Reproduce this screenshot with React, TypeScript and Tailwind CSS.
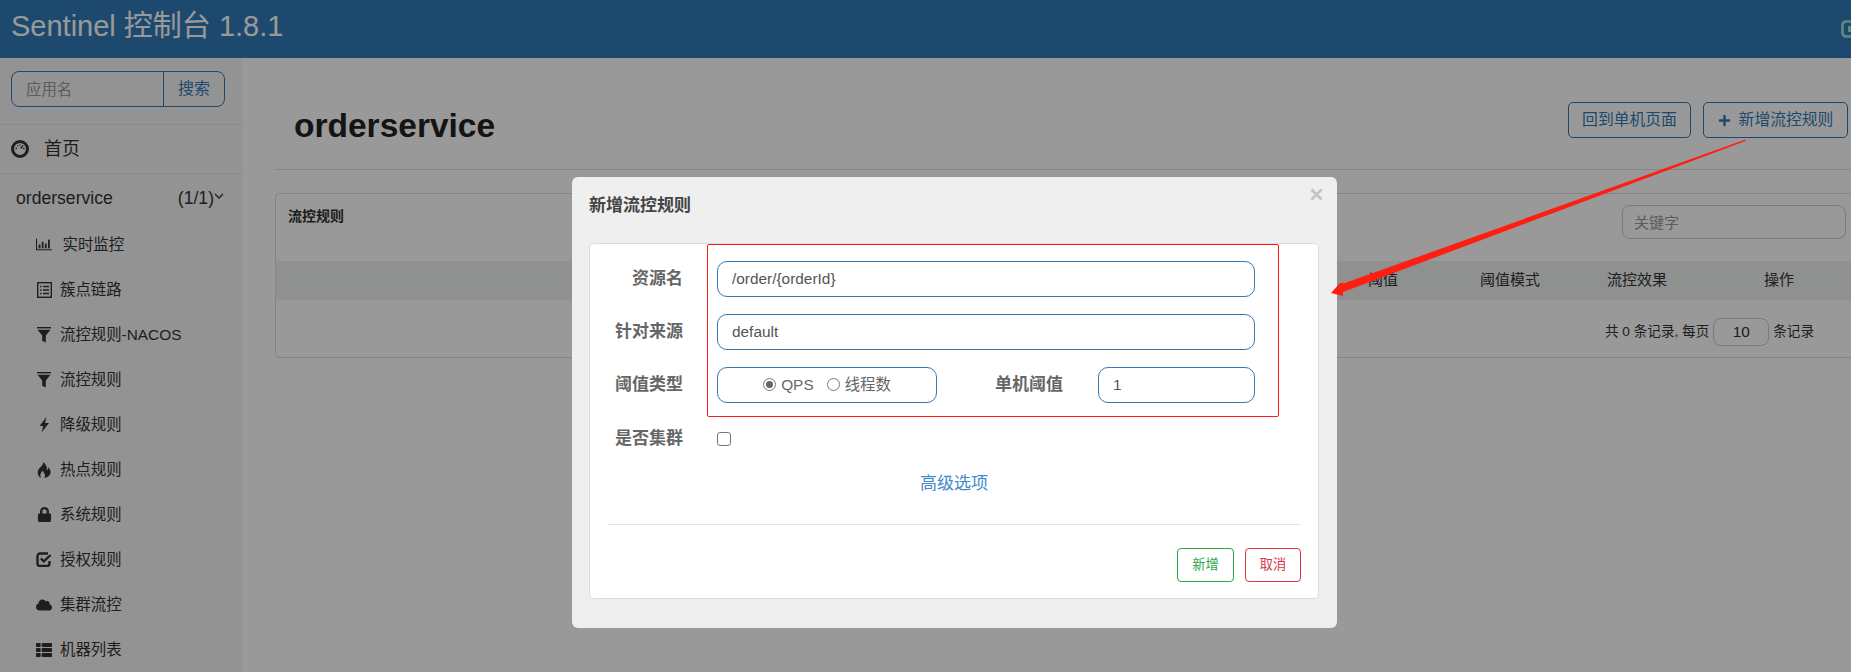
import { FaCloud, FaLock, FaPlus, FaThList } from "react-icons/fa";
import type { ReactNode } from "react";

const FONT = "font-['Liberation_Sans','Noto_Sans_CJK_SC',sans-serif]";

const Funnel = () => (
  <svg viewBox="0 0 14 16" className="h-[16px] w-[14px] fill-current">
    <rect x="0" y="0" width="14" height="1.4" />
    <path d="M0.5 2.8h13L8.8 8.5V15.500l-3.600-1.800V8.500z" />
  </svg>
);

const Gauge = () => (
  <svg viewBox="0 0 18 18" className="h-[18px] w-[18px]">
    <circle cx="9" cy="9" r="7.500" fill="none" stroke="currentColor" strokeWidth="3" />
    <path d="M4.500 8.500h1.500M12 8.500h1.500M6.500 5.500l.8.8M9 4.500v1M12 5.500L9.500 8.500" stroke="currentColor" strokeWidth="1.300" fill="none" />
  </svg>
);

const Stats = () => (
  <svg viewBox="0 0 18 13" className="h-[13px] w-[18px] fill-current">
    <path d="M0 0h1.200v11.800H18V13H0z" />
    <rect x="3" y="6.500" width="2" height="4.300" />
    <rect x="6.500" y="3.500" width="2" height="7.300" />
    <rect x="10" y="5.500" width="2" height="5.300" />
    <rect x="13.500" y="1" width="2" height="9.800" />
  </svg>
);

const ListAlt = () => (
  <svg viewBox="0 0 15 16" className="h-[16px] w-[15px]">
    <rect x="0.700" y="0.700" width="13.600" height="14.600" fill="none" stroke="currentColor" strokeWidth="1.400" />
    <path d="M3 4.500h1.500M6 4.500h6M3 8h1.500M6 8h6M3 11.500h1.500M6 11.500h6" stroke="currentColor" strokeWidth="1.400" fill="none" />
  </svg>
);

const Flash = () => (
  <svg viewBox="0 0 10 16" className="h-[16px] w-[10px] fill-current">
    <path d="M7.500 0L0.500 9h3.800L2.500 15.500 10 6H6z" />
  </svg>
);

const Fire = () => (
  <svg viewBox="0 0 14 16" className="h-[16px] w-[14px] fill-current">
    <path d="M6 0C7 3 3 5 1.500 7.500 0 10 .5 14 4 16 2.500 13 3.500 10.500 6 8.500c0 2.500 2 2.500 2 5 0 1-.2 2-1 2.500 4-.5 7-3 6.500-6.500-.2-2-1.500-3.500-2-4.500 0 2-1 3-1.700 3C10.500 5 9 2 6 0z" />
  </svg>
);

const CheckBox = () => (
  <svg viewBox="0 0 16 15" className="h-[15px] w-[16px]">
    <path d="M13.500 9v2.500a2.500 2.500 0 0 1-2.500 2.500H4a2.500 2.500 0 0 1-2.500-2.500V4A2.500 2.500 0 0 1 4 1.500h8" fill="none" stroke="currentColor" strokeWidth="2.400" />
    <path d="M4.800 6.400l3 3L14.600 3" fill="none" stroke="currentColor" strokeWidth="2.200" />
  </svg>
);

const menu: { icon: ReactNode; label: string; gap: string }[] = [
  { icon: <Stats />, label: "实时监控", gap: "gap-[10.5px]" },
  { icon: <ListAlt />, label: "簇点链路", gap: "gap-[8px]" },
  { icon: <Funnel />, label: "流控规则-NACOS", gap: "gap-[8px]" },
  { icon: <Funnel />, label: "流控规则", gap: "gap-[8px]" },
  { icon: <Flash />, label: "降级规则", gap: "gap-[8px]" },
  { icon: <Fire />, label: "热点规则", gap: "gap-[8px]" },
  { icon: <FaLock size={15} />, label: "系统规则", gap: "gap-[8px]" },
  { icon: <CheckBox />, label: "授权规则", gap: "gap-[8px]" },
  { icon: <FaCloud size={16} />, label: "集群流控", gap: "gap-[8px]" },
  { icon: <FaThList size={16} />, label: "机器列表", gap: "gap-[8px]" },
];

const Sidebar = () => (
  <aside className="h-[614px] w-[242px] shrink-0 overflow-hidden bg-[#f5f5f5] text-[#333]">
    <div className="h-[66px] pl-[11px] pt-[13px]">
      <div className="flex h-[36px] w-[214px] rounded-[8px] border border-[#337ab7]">
        <div className="flex-1 pl-[14px] pt-[6px] text-[15.4px] text-[#999]">应用名</div>
        <div className="flex w-[61px] items-center justify-center border-l border-[#337ab7] text-[16px] text-[#337ab7]">搜索</div>
      </div>
    </div>
    <div className="flex h-[50px] items-center gap-[15px] border-y border-[#e7e7e7] pl-[11px] text-[18px]">
      <Gauge />
      <span>首页</span>
    </div>
    <div className="flex h-[47px] items-center pl-[16px] pr-[18px] pt-[2px] text-[17.6px]">
      <span className="flex-1">orderservice</span>
      <span>(1/1)</span>
      <svg viewBox="0 0 10 6" className="mb-[6px] h-[6px] w-[10px]">
        <path d="M1 1l4 4 4-4" fill="none" stroke="currentColor" strokeWidth="1.300" />
      </svg>
    </div>
    <ul className="mt-[1px]">
      {menu.map((item) => (
        <li key={item.label} className={`flex h-[45px] items-center pl-[36px] text-[15.4px] ${item.gap}`}>
          <span className="flex w-[16px] justify-center">{item.icon}</span>
          <span>{item.label}</span>
        </li>
      ))}
    </ul>
  </aside>
);

const Main = () => (
  <main className="mt-[19px] flex-1 overflow-hidden bg-white pl-[33px] text-[#333]">
    <div className="flex h-[93px] items-start justify-between border-b border-[#ddd] pl-[19px] pr-[3px]">
      <h1 className="mt-[29px] text-[33.5px] leading-[40px] font-bold text-[#222]">orderservice</h1>
      <div className="mt-[25px] flex gap-[12px] text-[15.8px] text-[#337ab7]">
        <div className="flex h-[36px] w-[123px] items-center justify-center rounded-[5px] border border-[#337ab7]">回到单机页面</div>
        <div className="flex h-[36px] w-[145px] items-center justify-center gap-[8px] rounded-[5px] border border-[#337ab7]">
          <FaPlus size={13} />
          新增流控规则
        </div>
      </div>
    </div>
    <section className="mt-[23px] h-[165px] rounded-l-[5px] border-y border-l border-[#ddd]">
      <div className="flex h-[67px] justify-between pl-[12px] pr-[5px]">
        <span className="mt-[12px] text-[14px] leading-[20px] font-bold">流控规则</span>
        <div className="mt-[11px] h-[34px] w-[224px] rounded-[8px] border border-[#ccc] pl-[11px] pt-[6px] text-[15px] text-[#999]">关键字</div>
      </div>
      <div className="relative h-[39px] bg-[#eef0f1] text-[15px] leading-[38px]">
        <span className="absolute left-[1092px]">阈值</span>
        <span className="absolute left-[1204px]">阈值模式</span>
        <span className="absolute left-[1331px]">流控效果</span>
        <span className="absolute left-[1488px]">操作</span>
      </div>
      <div className="flex items-center gap-[4px] pl-[1329px] pt-[18px] text-[13.6px]">
        <span>共 0 条记录, 每页</span>
        <span className="flex h-[28px] w-[56px] items-center justify-center rounded-[8px] border border-[#ccc] text-[15.4px]">10</span>
        <span>条记录</span>
      </div>
    </section>
  </main>
);

const fieldBox = "h-[36px] rounded-[10px] border border-[#337ab7] bg-white text-[15.4px] text-[#555]";
const labelText = "w-[93px] text-right text-[17px] font-bold text-[#666]";

const Field = ({ label, value }: { label: string; value: string }) => (
  <div className="flex items-center gap-[34px]">
    <span className={labelText}>{label}</span>
    <div className={`${fieldBox} w-[538px] pl-[14px] leading-[33px]`}>{value}</div>
  </div>
);

const Dialog = () => (
  <div className="absolute left-[572px] top-[177px] h-[451px] w-[765px] rounded-[6px] bg-[#efefef] px-[17px]">
    <svg viewBox="0 0 14 14" className="absolute right-[14px] top-[11px] h-[13px] w-[13px]">
      <path d="M1.500 1.500l11 11M12.500 1.500l-11 11" stroke="#c4c4c4" strokeWidth="3" fill="none" />
    </svg>
    <h3 className="pt-[18px] text-[17px] leading-[22px] font-bold text-[#444]">新增流控规则</h3>
    <div className="mt-[26px] h-[356px] w-[730px] rounded-[5px] border border-[#ddd] bg-white">
      <div className="flex flex-col gap-[17px] pt-[17px]">
        <Field label="资源名" value="/order/{orderId}" />
        <Field label="针对来源" value="default" />
        <div className="flex items-center gap-[34px]">
          <span className={labelText}>阈值类型</span>
          <div className={`${fieldBox} flex w-[220px] items-center justify-center gap-[13px]`}>
            <span className="flex items-center gap-[5px] text-[#666]">
              <span className="flex h-[13px] w-[13px] items-center justify-center rounded-full border border-[#777]">
                <span className="h-[7px] w-[7px] rounded-full bg-[#666]" />
              </span>
              QPS
            </span>
            <span className="flex items-center gap-[5px] text-[#666]">
              <span className="h-[13px] w-[13px] rounded-full border border-[#777]" />
              线程数
            </span>
          </div>
          <span className="ml-[24px] w-[69px] text-[17px] font-bold whitespace-nowrap text-[#666]">单机阈值</span>
          <div className={`${fieldBox} w-[157px] pl-[14px] leading-[33px]`}>1</div>
        </div>
        <div className="flex h-[38px] items-center gap-[34px]">
          <span className={labelText}>是否集群</span>
          <span className="h-[14px] w-[14px] rounded-[3px] border border-[#767676] bg-white" />
        </div>
      </div>
      <div className="mt-[14px] text-center text-[17px] leading-[24px] text-[#428bca]">高级选项</div>
      <div className="mx-[17px] mt-[28px] border-t border-[#e5e5e5] pt-[23px]">
        <div className="flex justify-end gap-[11px] text-[13.2px]">
          <span className="flex h-[34px] w-[57px] items-center justify-center rounded-[4px] border border-[#28a745] text-[#28a745]">新增</span>
          <span className="flex h-[34px] w-[56px] items-center justify-center rounded-[4px] border border-[#dc3545] text-[#dc3545]">取消</span>
        </div>
      </div>
    </div>
  </div>
);

export default function App() {
  return (
    <div className={`relative h-[672px] overflow-hidden bg-white ${FONT}`}>
      <header className="flex h-[58px] items-center justify-between overflow-hidden bg-[#337ab7] pl-[11px] pb-[4px]">
        <span className="text-[29px] text-white">Sentinel 控制台 1.8.1</span>
        <svg viewBox="0 0 10 18" className="mt-[4px] h-[18px] w-[10px]">
          <path d="M10 1.500H5a3.500 3.500 0 0 0-3.500 3.500v8A3.500 3.500 0 0 0 5 16.500h5" fill="none" stroke="#a7e0d8" strokeWidth="2.600" />
          <rect x="7" y="6" width="3" height="6" fill="#a7e0d8" />
        </svg>
      </header>
      <div className="flex">
        <Sidebar />
        <Main />
      </div>

      {/* modal backdrop */}
      <div className="absolute inset-0 bg-black/40" />
      <Dialog />

      {/* hand-drawn annotations on the screenshot */}
      <div className="absolute left-[707px] top-[244px] h-[173px] w-[572px] rounded-[2px] border border-[#ff1a1a]" />
      <svg className="absolute inset-0 h-[672px] w-[1851px]" viewBox="0 0 1851 672">
        <path d="M1745.500 139.500L1345 283L1340 283L1331 293L1343 296L1343 292L1745.500 141z" fill="#ff1f12" />
      </svg>
    </div>
  );
}
